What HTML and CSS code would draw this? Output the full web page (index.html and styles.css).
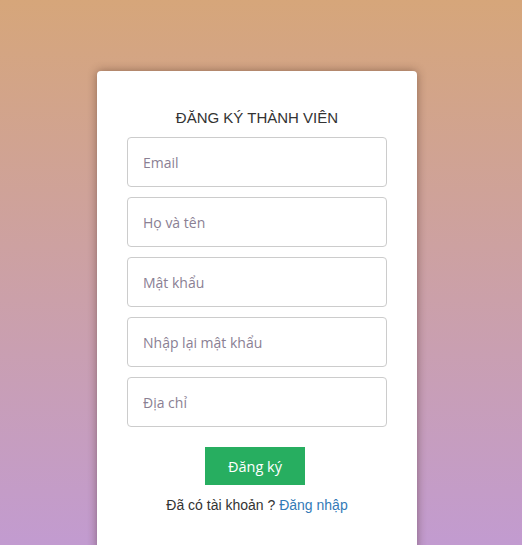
FILE: index.html
```html
<!DOCTYPE html>
<html lang="vi">
<head>
<meta charset="utf-8">
<title>Đăng ký</title>
<link rel="stylesheet" href="styles.css">
</head>
<body>
<div class="page">
  <form class="card">
    <h3 class="title">ĐĂNG KÝ THÀNH VIÊN</h3>
    <input class="field" type="text" placeholder="Email">
    <input class="field" type="text" placeholder="Họ và tên">
    <input class="field" type="password" placeholder="Mật khẩu">
    <input class="field" type="password" placeholder="Nhập lại mật khẩu">
    <input class="field" type="text" placeholder="Địa chỉ">
    <div class="actions">
      <button class="btn" type="button">Đăng ký</button>
    </div>
    <p class="note">Đã có tài khoản ? <a class="link" href="#">Đăng nhập</a></p>
  </form>
</div>
</body>
</html>
```
FILE: styles.css
```css
html, body {
  margin: 0;
  padding: 0;
  height: 100%;
}
body {
  background: linear-gradient(to bottom, #d6a67a 0%, #c29bd0 100%);
  font-family: "Liberation Sans", Arial, sans-serif;
  overflow: hidden;
}
.page {
  padding-top: 71px;
  padding-left: 97px;
}
.card {
  box-sizing: border-box;
  width: 320px;
  height: 480px;
  background: #fff;
  border-radius: 4px;
  box-shadow: 0 0 10px rgba(60, 30, 20, 0.45);
  padding: 37px 30px 0;
  display: flex;
  flex-direction: column;
  gap: 10px;
}
.title {
  margin: 0;
  text-align: center;
  font-size: 15px;
  font-weight: normal;
  color: #333;
  line-height: 20px;
  margin-bottom: -1px;
}
.field {
  box-sizing: border-box;
  width: 260px;
  height: 50px;
  margin: 0;
  border: 1px solid #ccc;
  border-radius: 4px;
  padding: 0 15px;
  font-family: "Open Sans", sans-serif;
  font-size: 14px;
  color: #555;
  outline: none;
}
.field::placeholder {
  color: #8a8093;
}
.actions {
  display: flex;
  justify-content: center;
  margin-top: 10px;
  padding-right: 4px;
}
.btn {
  width: 100px;
  height: 38px;
  border: none;
  border-radius: 0;
  background: #27ae60;
  color: #fff;
  font-family: "Open Sans", sans-serif;
  font-size: 14.5px;
  cursor: pointer;
}
.note {
  margin: 0;
  text-align: center;
  font-size: 14px;
  color: #333;
  line-height: 20px;
}
.link {
  color: #337ab7;
  text-decoration: none;
}
```
